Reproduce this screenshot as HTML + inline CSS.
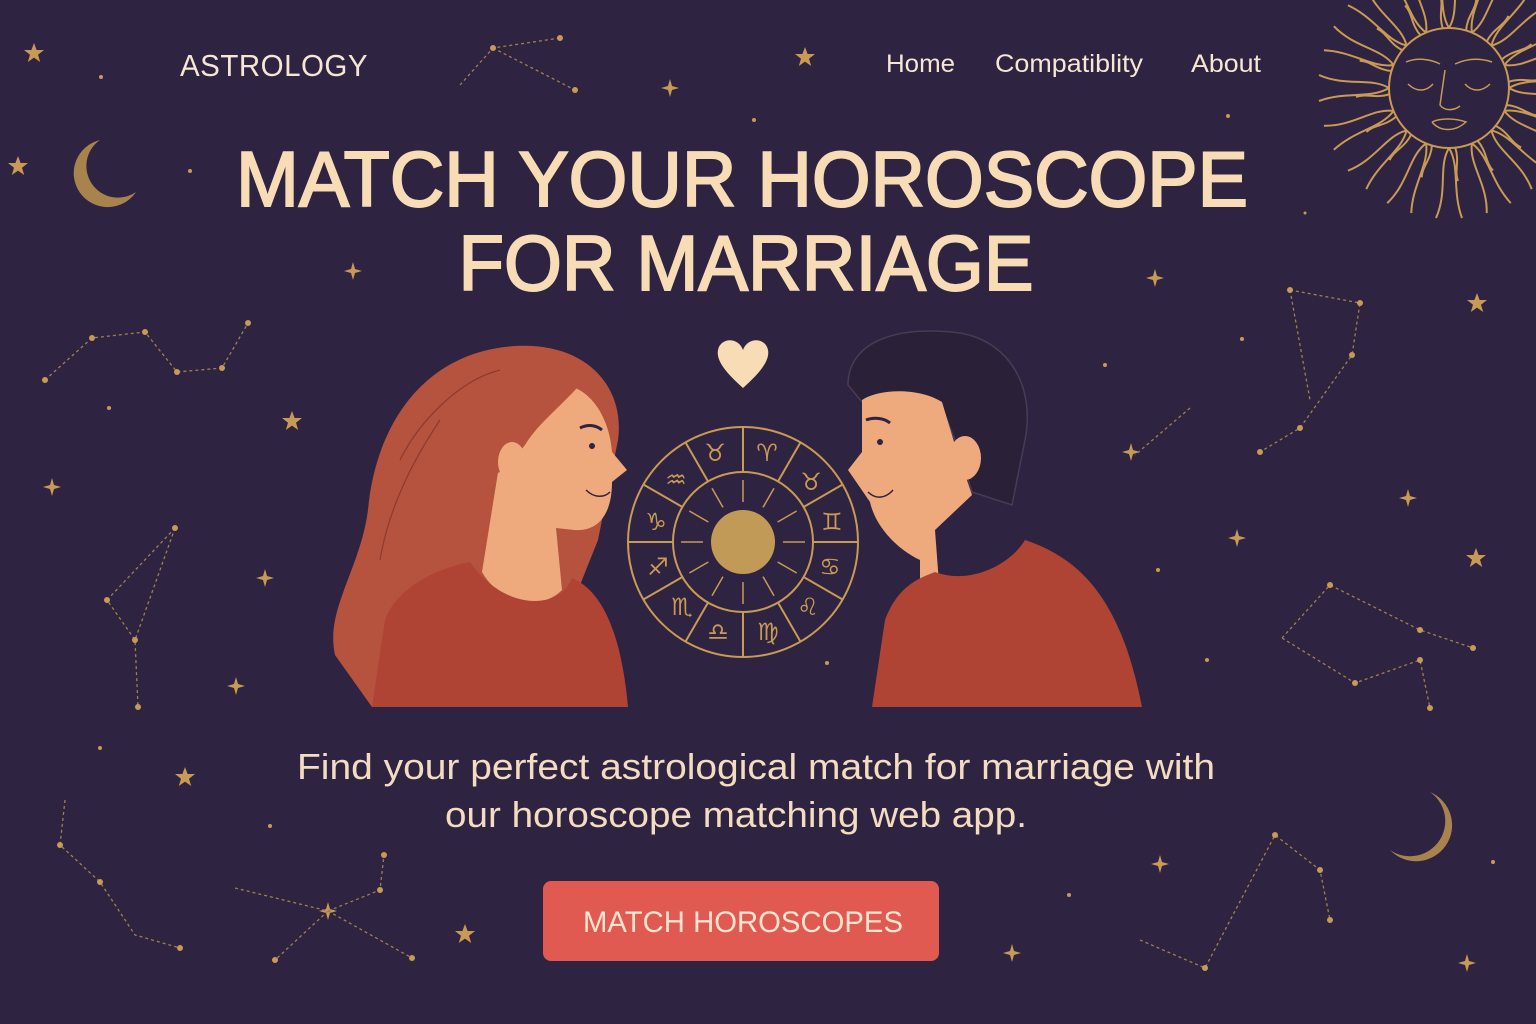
<!DOCTYPE html>
<html><head><meta charset="utf-8"><style>
html,body{margin:0;padding:0;background:#2e2340;}
svg{display:block}
text{font-family:"Liberation Sans","DejaVu Sans",sans-serif}
</style></head><body>
<svg width="1536" height="1024" viewBox="0 0 1536 1024" xmlns="http://www.w3.org/2000/svg">
<defs>
<path id="st" d="M0,-9 L2,-2 L9,0 L2,2 L0,9 L-2,2 L-9,0 L-2,-2 Z"/>
<path id="st5" d="M0,-10 L2.6,-3 L10,-3 L4,1.8 L6.2,9 L0,4.6 L-6.2,9 L-4,1.8 L-10,-3 L-2.6,-3 Z"/>
</defs>
<rect width="1536" height="1024" fill="#2e2340"/>
<g fill="#c99a55">
<use href="#st5" x="34" y="53"/><use href="#st5" x="805" y="57"/><use href="#st5" x="18" y="166"/>
<use href="#st" x="670" y="88"/><use href="#st" x="353" y="271"/><use href="#st" x="1155" y="278"/>
<use href="#st5" x="1477" y="303"/><use href="#st5" x="292" y="421"/><use href="#st" x="52" y="487"/>
<use href="#st" x="1131" y="452"/><use href="#st" x="1408" y="498"/><use href="#st" x="1237" y="538"/>
<use href="#st5" x="1476" y="558"/><use href="#st" x="265" y="578"/><use href="#st" x="236" y="686"/>
<use href="#st5" x="185" y="777"/><use href="#st" x="1160" y="864"/><use href="#st5" x="465" y="934"/>
<use href="#st" x="1012" y="953"/><use href="#st" x="1467" y="963"/><use href="#st" x="328" y="911"/>
<circle cx="101" cy="77" r="2"/><circle cx="190" cy="171" r="2"/><circle cx="754" cy="120" r="2"/><circle cx="1228" cy="116" r="2"/>
<circle cx="109" cy="408" r="2"/><circle cx="1105" cy="365" r="2"/><circle cx="1242" cy="339" r="2"/><circle cx="1158" cy="570" r="2"/>
<circle cx="100" cy="748" r="2"/><circle cx="270" cy="826" r="2"/><circle cx="1069" cy="895" r="2"/><circle cx="1493" cy="862" r="2"/>
<circle cx="1305" cy="213" r="1.5"/><circle cx="827" cy="663" r="2"/><circle cx="547" cy="692" r="2"/><circle cx="1207" cy="660" r="2"/>
</g>
<g stroke="#a07f50" stroke-width="1.3" stroke-dasharray="3 3" fill="none">
<polyline points="460,85 493,48 560,38"/><polyline points="493,48 575,90"/>
<polyline points="45,380 92,338 145,332 177,372 222,368 248,323"/>
<polyline points="175,528 107,600 135,640 138,707"/><polyline points="175,528 135,640"/>
<polyline points="1290,290 1360,303 1352,355 1300,428 1260,452"/><polyline points="1290,290 1310,400"/>
<polyline points="1190,408 1135,455"/>
<polyline points="1282,638 1330,585 1420,630 1473,648"/><polyline points="1282,638 1355,683 1420,660 1430,708"/>
<polyline points="65,800 60,845 100,882 135,935 180,948"/>
<polyline points="235,888 328,911 380,890 384,855"/><polyline points="328,911 275,960"/><polyline points="328,911 412,958"/>
<polyline points="1140,940 1205,968 1275,835 1320,870 1330,920"/>
</g>
<g fill="#c99a55">
<circle cx="493" cy="48" r="3"/><circle cx="560" cy="38" r="3"/><circle cx="575" cy="90" r="3"/>
<circle cx="92" cy="338" r="3"/><circle cx="145" cy="332" r="3"/><circle cx="177" cy="372" r="3"/><circle cx="222" cy="368" r="3"/><circle cx="248" cy="323" r="3"/><circle cx="45" cy="380" r="3"/>
<circle cx="175" cy="528" r="3"/><circle cx="107" cy="600" r="3"/><circle cx="135" cy="640" r="3"/><circle cx="138" cy="707" r="3"/>
<circle cx="1290" cy="290" r="3"/><circle cx="1360" cy="303" r="3"/><circle cx="1352" cy="355" r="3"/><circle cx="1300" cy="428" r="3"/><circle cx="1260" cy="452" r="3"/>
<circle cx="1330" cy="585" r="3"/><circle cx="1420" cy="630" r="3"/><circle cx="1473" cy="648" r="3"/><circle cx="1355" cy="683" r="3"/><circle cx="1420" cy="660" r="3"/><circle cx="1430" cy="708" r="3"/>
<circle cx="60" cy="845" r="3"/><circle cx="100" cy="882" r="3"/><circle cx="180" cy="948" r="3"/><circle cx="380" cy="890" r="3"/><circle cx="384" cy="855" r="3"/><circle cx="412" cy="958" r="3"/><circle cx="275" cy="960" r="3"/>
<circle cx="1205" cy="968" r="3"/><circle cx="1275" cy="835" r="3"/><circle cx="1320" cy="870" r="3"/><circle cx="1330" cy="920" r="3"/>
</g>
<!-- moons -->
<path d="M100,140 A34,34 0 1 0 136,192 A28,28 0 1 1 100,140 Z" fill="#a9834d"/>
<path d="M1430,792 A36,36 0 1 1 1390,850 A30,30 0 1 0 1430,792 Z" fill="#a9834d"/>
<!-- sun -->
<g stroke="#c99a55" stroke-width="2" fill="none">
<circle cx="1449" cy="88" r="60"/>
<g id="rays">
<path d="M1449,28 C1438,10 1446,-15 1436,-42 M1449,28 C1460,10 1450,-15 1462,-42 M1443,29 C1438,15 1444,5 1440,-5"/>
</g>
<use href="#rays" transform="rotate(22.5 1449 88)"/><use href="#rays" transform="rotate(45 1449 88)"/><use href="#rays" transform="rotate(67.5 1449 88)"/>
<use href="#rays" transform="rotate(90 1449 88)"/><use href="#rays" transform="rotate(112.5 1449 88)"/><use href="#rays" transform="rotate(135 1449 88)"/>
<use href="#rays" transform="rotate(157.5 1449 88)"/><use href="#rays" transform="rotate(180 1449 88)"/><use href="#rays" transform="rotate(202.5 1449 88)"/>
<use href="#rays" transform="rotate(225 1449 88)"/><use href="#rays" transform="rotate(247.5 1449 88)"/><use href="#rays" transform="rotate(270 1449 88)"/>
<use href="#rays" transform="rotate(292.5 1449 88)"/><use href="#rays" transform="rotate(315 1449 88)"/><use href="#rays" transform="rotate(337.5 1449 88)"/>
<path stroke-width="1.5" d="M1406,62 C1415,58 1428,58 1440,64 M1455,64 C1468,58 1480,58 1492,62 M1445,70 L1440,105 C1445,112 1455,110 1460,106 M1408,84 C1416,92 1426,92 1433,84 M1465,84 C1472,92 1482,92 1490,84 M1432,122 C1440,118 1455,118 1466,122 C1455,132 1440,132 1432,122"/>
</g>
<!-- nav -->
<text x="180" y="76" font-size="31" fill="#f6e6d4" letter-spacing="0.5" textLength="188" lengthAdjust="spacingAndGlyphs">ASTROLOGY</text>
<text x="886" y="72" font-size="25" fill="#f6e6d4" textLength="69" lengthAdjust="spacingAndGlyphs">Home</text>
<text x="995" y="72" font-size="25" fill="#f6e6d4" textLength="148" lengthAdjust="spacingAndGlyphs">Compatiblity</text>
<text x="1191" y="72" font-size="25" fill="#f6e6d4" textLength="70" lengthAdjust="spacingAndGlyphs">About</text>
<!-- title -->
<g fill="#f7dcb6" stroke="#f7dcb6" stroke-width="2">
<text x="742" y="206" font-size="78" text-anchor="middle" textLength="1012" lengthAdjust="spacingAndGlyphs">MATCH YOUR HOROSCOPE</text>
<text x="746" y="290" font-size="78" text-anchor="middle" textLength="575" lengthAdjust="spacingAndGlyphs">FOR MARRIAGE</text>
</g>
<!-- heart -->
<path d="M743,388 C725,372 716,360 718,350 C720,338 738,336 743,350 C748,336 766,338 768,350 C770,360 761,372 743,388 Z" fill="#f7dcb6"/>
<!-- woman -->
<path d="M372,707 L335,655 C325,610 360,570 368,510 C375,430 420,352 515,346 C590,342 625,390 618,440 L598,540 L578,590 L560,707 Z" fill="#b5533f"/>
<path d="M548,385 C590,378 610,420 612,452 L627,470 L612,482 C612,512 600,532 574,530 L556,528 L562,590 C540,612 500,604 482,572 L500,460 Z" fill="#eeaa7c"/>
<path d="M470,400 C495,360 560,352 590,372 C570,400 540,420 525,445 L505,470 L480,480 Z" fill="#b5533f"/>
<ellipse cx="512" cy="462" rx="14" ry="20" fill="#eeaa7c"/>
<path d="M372,707 L385,620 C398,585 440,568 470,562 C505,612 560,610 572,578 C605,592 622,640 628,707 Z" fill="#b04434"/>
<circle cx="592" cy="446" r="3" fill="#2e2340"/><path d="M580,428 C588,424 596,425 602,430" stroke="#2e2340" stroke-width="3" fill="none"/>
<path d="M586,490 C594,498 604,498 610,492" stroke="#2e2340" stroke-width="1.5" fill="none"/>
<path d="M400,460 C420,420 460,380 500,370 M380,560 C390,500 420,450 440,420" stroke="#8e3a2e" stroke-width="1.2" fill="none"/>
<!-- man -->
<path d="M848,385 C848,340 900,325 960,333 C1012,342 1035,390 1025,440 L1012,505 L972,492 L955,440 L940,402 C920,395 880,392 862,402 Z" fill="#2a2038" stroke="#4a3a55" stroke-width="1.5"/>
<path d="M862,400 C880,388 920,388 942,402 L955,445 L972,495 L935,530 L938,570 C940,590 935,598 920,590 L920,560 C895,548 875,525 870,502 L848,470 L862,452 Z" fill="#eeaa7c"/>
<ellipse cx="965" cy="458" rx="16" ry="22" fill="#eeaa7c"/>
<path d="M872,707 L885,620 C898,585 920,578 935,572 C970,585 1010,565 1025,540 C1085,560 1122,605 1142,707 Z" fill="#b04434"/>
<circle cx="880" cy="442" r="3" fill="#2e2340"/><path d="M866,420 C874,417 884,418 890,423" stroke="#2e2340" stroke-width="3" fill="none"/>
<path d="M868,492 C876,500 886,498 893,490" stroke="#2e2340" stroke-width="1.5" fill="none"/>
<!-- wheel -->
<g transform="translate(743,542)" stroke="#c99a55" stroke-width="2" fill="none">
<circle r="115"/><circle r="70"/><circle r="32" fill="#c09a56" stroke="none"/>
<g id="sp"><line x1="0" y1="-70" x2="0" y2="-115"/><line x1="0" y1="-40" x2="0" y2="-62" stroke-width="1.5"/></g>
<use href="#sp" transform="rotate(30)"/><use href="#sp" transform="rotate(60)"/><use href="#sp" transform="rotate(90)"/>
<use href="#sp" transform="rotate(120)"/><use href="#sp" transform="rotate(150)"/><use href="#sp" transform="rotate(180)"/>
<use href="#sp" transform="rotate(210)"/><use href="#sp" transform="rotate(240)"/><use href="#sp" transform="rotate(270)"/>
<use href="#sp" transform="rotate(300)"/><use href="#sp" transform="rotate(330)"/>
</g>
<g fill="#c99a55" font-size="24" text-anchor="middle">
<text x="767" y="461" font-family="DejaVu Sans">♈</text><text x="715" y="461" font-family="DejaVu Sans">♉</text>
<text x="811" y="490" font-family="DejaVu Sans">♉</text><text x="832" y="530" font-family="DejaVu Sans">♊</text>
<text x="830" y="575" font-family="DejaVu Sans">♋</text><text x="808" y="615" font-family="DejaVu Sans">♌</text>
<text x="768" y="640" font-family="DejaVu Sans">♍</text><text x="718" y="640" font-family="DejaVu Sans">♎</text>
<text x="682" y="615" font-family="DejaVu Sans">♏</text><text x="658" y="575" font-family="DejaVu Sans">♐</text>
<text x="656" y="530" font-family="DejaVu Sans">♑</text><text x="676" y="488" font-family="DejaVu Sans">♒</text>
</g>
<!-- subtitle -->
<text x="756" y="779" font-size="36" fill="#f3dcc0" text-anchor="middle" textLength="918" lengthAdjust="spacingAndGlyphs">Find your perfect astrological match for marriage with</text>
<text x="736" y="827" font-size="36" fill="#f3dcc0" text-anchor="middle" textLength="582" lengthAdjust="spacingAndGlyphs">our horoscope matching web app.</text>
<!-- button -->
<rect x="543" y="881" width="396" height="80" rx="8" fill="#e05a52"/>
<text x="743" y="932" font-size="30" fill="#fbe5d2" text-anchor="middle" textLength="320" lengthAdjust="spacingAndGlyphs">MATCH HOROSCOPES</text>
</svg>
</body></html>
